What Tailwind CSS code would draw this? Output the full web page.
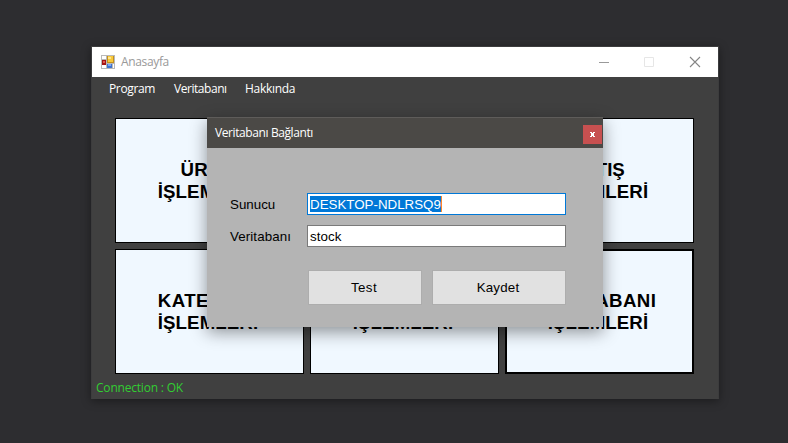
<!DOCTYPE html>
<html lang="tr">
<head>
<meta charset="utf-8">
<title>Anasayfa</title>
<script src="https://cdn.jsdelivr.net/npm/@tailwindcss/browser@4"></script>
</head>
<body class="w-[788px] h-[443px] overflow-hidden bg-[#2d2d30] font-['Open_Sans','Noto_Sans',sans-serif] text-[12px]">
<div class="relative w-[788px] h-[443px] overflow-hidden">
  <!-- Main window -->
  <main class="absolute left-[91px] top-[46px] w-[628px] h-[353px] bg-[#404040] border border-[#3c3c3d] border-b-[#404040] shadow-[0_2px_9px_rgba(0,0,0,0.4)] flex flex-col">
    <header class="h-[30px] shrink-0 bg-white flex items-center pl-[9px]">
      <svg class="w-[14px] h-[14px] shrink-0" viewBox="0 0 14 14" shape-rendering="crispEdges">
        <path d="M0 0h14v14H0z" fill="#b9b9b9"/>
        <path d="M1 1h4v3H1zM1 10h4v3H1zM12 9h1v4h-1z" fill="#fff"/>
        <path d="M6 1h7v7H6z" fill="#c4901c"/><path d="M7 1h5v6H7z" fill="#f8c93c"/><path d="M7 2h3v2H7z" fill="#ffe58c"/>
        <path d="M1 5h4v5H1z" fill="#a51414"/><path d="M2 6h2v2H2z" fill="#e05a50"/>
        <path d="M6 9h5v4H6z" fill="#3f73cf"/><path d="M7 9h3v2H7z" fill="#7da7f0"/>
      </svg>
      <span class="ml-[6px] text-[#999] tracking-[-0.35px]">Anasayfa</span>
      <svg class="ml-auto mr-[17px] w-[103px] h-[12px]" viewBox="0 0 103 12" fill="none">
        <path d="M1 6.5h10" stroke="#999"/>
        <path d="M46.5 1.5h9v9h-9z" stroke="#e6e6e6"/>
        <path d="M92 1l10 10M102 1l-10 10" stroke="#858585" stroke-width="1.1"/>
      </svg>
    </header>
    <nav class="h-[24px] shrink-0 flex items-center pl-[17px] gap-[19px] text-white">
      <span class="w-[46px] whitespace-nowrap tracking-[-0.35px]">Program</span>
      <span class="w-[52px] whitespace-nowrap tracking-[-0.45px]">Veritabanı</span>
      <span class="whitespace-nowrap tracking-[-0.3px]">Hakkında</span>
    </nav>
    <section class="mt-[17px] ml-[23px] grid grid-cols-[189px_189px_189px] grid-rows-[125px_125px] gap-[6px] text-black font-bold font-['Liberation_Sans',Arial,sans-serif] text-[18.67px] leading-[22px] text-center">
      <div class="bg-[#f0f8ff] border border-black flex flex-col items-center justify-center pr-[3px]"><span class="tracking-[0.3px]">ÜRÜN</span><span class="tracking-[0.1px]">İŞLEMLERİ</span></div>
      <div class="bg-[#f0f8ff] border border-black"></div>
      <div class="bg-[#f0f8ff] border border-black flex flex-col items-center justify-center pr-[3px]"><span>SATIŞ</span><span class="tracking-[0.1px]">İŞLEMLERİ</span></div>
      <div class="bg-[#f0f8ff] border border-black flex flex-col items-center justify-center pr-[3px]"><span class="tracking-[0.4px]">KATEGORİ</span><span class="tracking-[0.1px]">İŞLEMLERİ</span></div>
      <div class="bg-[#f0f8ff] border border-black flex items-center justify-center pt-[22px] pr-[3px]"><span class="tracking-[0.1px]">İŞLEMLERİ</span></div>
      <div class="bg-[#f0f8ff] border-2 border-black flex flex-col items-center justify-center pr-[3px]"><span class="tracking-[0.4px]">VERİTABANI</span><span class="tracking-[0.1px]">İŞLEMLERİ</span></div>
    </section>
    <footer class="pl-[4px] pt-[5px] leading-[18px] text-[#32cd32] tracking-[-0.2px]">Connection : OK</footer>
  </main>

  <!-- Connection dialog -->
  <div class="absolute left-[207px] top-[117px] w-[396px] h-[210px] bg-[#b4b4b4] shadow-[0_5px_16px_rgba(0,0,0,0.42)] flex flex-col">
    <div class="h-[31px] shrink-0 bg-[#4b4946] border-t border-[#5e5c5a] flex items-center pl-[8px] pr-[1px] text-white">
      <span class="tracking-[-0.4px]">Veritabanı Bağlantı</span>
      <span class="ml-auto mt-[2px] w-[19px] h-[19px] bg-[#c75050] flex items-center justify-center">
        <svg class="w-[5px] h-[5px]" viewBox="0 0 5 5" fill="#fff" shape-rendering="crispEdges"><path d="M0 0h2v1H0zM3 0h2v1H3zM1 1h3v1H1zM1 2h3v1H1zM1 3h3v1H1zM0 4h2v1H0zM3 4h2v1H3z"/></svg>
      </span>
    </div>
    <div class="pl-[23px] pt-[45px] font-['Liberation_Sans',Arial,sans-serif] text-[13.33px] text-black">
      <div class="flex items-center h-[22px]">
        <span class="w-[77px] pt-[2px]">Sunucu</span>
        <div class="w-[259px] h-[22px] bg-white border border-[#0078d7] px-[2px] flex items-center"><span class="bg-[#0078d7] text-white h-[16px] leading-[17px] border-r border-[#ff8728]">DESKTOP-NDLRSQ9</span></div>
      </div>
      <div class="flex items-center h-[22px] mt-[10px]">
        <span class="w-[77px] pt-[2px] tracking-[0.1px]">Veritabanı</span>
        <div class="w-[259px] h-[22px] bg-white border border-[#7a7a7a] px-[2px] pt-[2px] flex items-center tracking-[0.1px]">stock</div>
      </div>
      <div class="flex gap-[10px] mt-[23px] pl-[78px]">
        <div class="w-[114px] h-[35px] bg-[#e1e1e1] border border-[#adadad] flex items-center justify-center pr-[2px] tracking-[0.4px]">Test</div>
        <div class="w-[134px] h-[35px] bg-[#e1e1e1] border border-[#adadad] flex items-center justify-center pr-[2px] tracking-[0.2px]">Kaydet</div>
      </div>
    </div>
  </div>
</div>
</body>
</html>
